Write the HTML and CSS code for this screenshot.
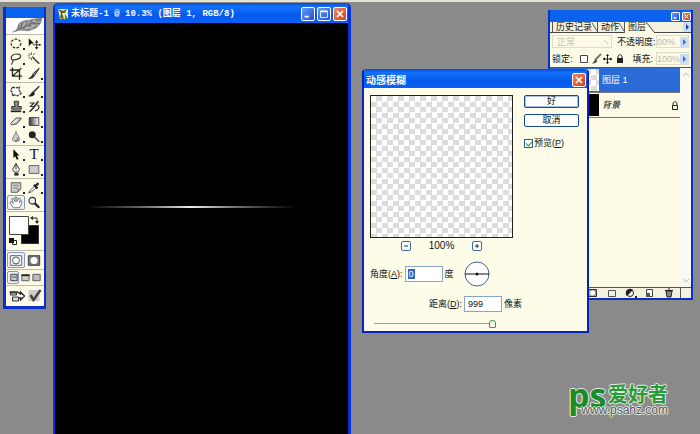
FILE: index.html
```html
<!DOCTYPE html>
<html lang="zh-CN">
<head>
<meta charset="utf-8">
<title>未标题-1</title>
<link rel="stylesheet" href="styles.css">
</head>
<body>
<main class="desktop">

<aside class="toolbox">
  <div class="toolbox-title"></div>
  <svg class="feather" viewBox="0 0 38 17"><path d="M8 14C12 11 10 6 15 4C18 1 22 3 26 1C30 0 34 0 37 0C38 3 36 6 34 8C31 12 26 13 22 14C18 14 14 13 11 14Z" fill="#999"/><path d="M6 15C14 12 20 9 36 1M15 11L16 4M19 9L21 3M24 7L27 1M17 11L24 13M22 8L31 10M27 6L35 6M13 12L12 8M29 4L32 1" fill="none" stroke="#666"/><path d="M17 8L20 5M25 10L29 8M19 12L23 10M28 3L31 4" stroke="#ddd"/></svg>
  <div class="tools">
    <button class="tool more" aria-label="选框"><svg viewBox="0 0 16 14"><ellipse cx="8" cy="7" rx="5.500" ry="5" fill="none" stroke="#222" stroke-dasharray="3 1.500" stroke-width="1.300"/></svg></button>
    <button class="tool" aria-label="移动"><svg viewBox="0 0 16 14"><path d="M2 1L8 7L5 7L2 10Z" fill="#111"/><path d="M11 4V13M6.500 8.500H15.500" stroke="#222"/><path d="M9 6L11 3L13 6ZM9 11L11 14L13 11ZM14 7L16 8.500L14 10Z" fill="#222"/></svg></button>
    <button class="tool more" aria-label="套索"><svg viewBox="0 0 16 14"><path d="M4 9C0 5 5 1 10 2C15 2 14 7 9 8C6 9 4 8 4 9C6 10 3 12 3 14" fill="none" stroke="#333" stroke-width="1.300"/></svg></button>
    <button class="tool" aria-label="魔棒"><svg viewBox="0 0 16 14"><path d="M6 5L14 13" stroke="#333" stroke-width="1.600"/><path d="M5 0V3M5 6V9M1 4H3M7 3L9 1M2 1L4 3M2 7L4 6" stroke="#444"/></svg></button>
    <button class="tool" aria-label="裁剪"><svg viewBox="0 0 16 14"><path d="M4 0V10H15M1 3H12V14M4 10L14 1" fill="none" stroke="#222" stroke-width="1.500"/></svg></button>
    <button class="tool more" aria-label="切片"><svg viewBox="0 0 16 14"><path d="M14 1L7 7L6 10L9 9Z" fill="#888" stroke="#222"/><path d="M6 9C4 10 4 12 1 13C5 14 8 12 9 9Z" fill="#333"/></svg></button>
  </div>
  <div class="tools">
    <button class="tool more" aria-label="修补"><svg viewBox="0 0 16 14"><path d="M4 2L7 3L12 2L11 5L14 9L10 12L7 11L4 12L4 8L2 6Z" fill="#fff" stroke="#333" stroke-width="1.400" stroke-dasharray="3 1"/></svg></button>
    <button class="tool more" aria-label="画笔"><svg viewBox="0 0 16 14"><path d="M14 1L7 8" stroke="#444" stroke-width="2"/><path d="M7 7C4 8 5 11 1 12C5 14 9 12 9 9Z" fill="#222"/></svg></button>
    <button class="tool more" aria-label="图章"><svg viewBox="0 0 16 14"><path d="M6 1H11V4L10 7H14V10H3V7H7L6 4Z" fill="#888" stroke="#222"/><path d="M2 12.500H14" stroke="#222" stroke-width="2"/></svg></button>
    <button class="tool more" aria-label="历史画笔"><svg viewBox="0 0 16 14"><path d="M13 1L7 9L3 13" stroke="#333" stroke-width="2"/><path d="M3 3H8L4 7H9M12 5C16 8 12 12 9 12" fill="none" stroke="#333" stroke-width="1.300"/></svg></button>
    <button class="tool more" aria-label="橡皮"><svg viewBox="0 0 16 14"><path d="M2 9L8 3H14L8 10L3 11Z" fill="#ddd" stroke="#333"/><path d="M3 10L8 9L14 3V5L8 11H3Z" fill="#777"/></svg></button>
    <button class="tool more" aria-label="渐变"><svg viewBox="0 0 16 14"><defs><linearGradient id="ramp"><stop stop-color="#333"/><stop offset="1" stop-color="#fff"/></linearGradient></defs><path d="M2.500 2.500H13.500V11.500H2.500Z" fill="url(#ramp)" stroke="#333"/></svg></button>
    <button class="tool more" aria-label="模糊"><svg viewBox="0 0 16 14"><path d="M8 1C8 4 4 7 4 10C4 14 12 14 12 10C12 7 8 4 8 1Z" fill="#ccc" stroke="#777"/><path d="M10 8V11L7 12" fill="none" stroke="#888" stroke-width="2"/></svg></button>
    <button class="tool more" aria-label="减淡"><svg viewBox="0 0 16 14"><circle cx="6" cy="5" r="4" fill="#222"/><path d="M8 7L14 13" stroke="#444" stroke-width="1.600"/></svg></button>
  </div>
  <div class="tools">
    <button class="tool more" aria-label="路径选择"><svg viewBox="0 0 16 14"><path d="M5 1L12 8H9L11 12L9 13L7 9L5 11Z" fill="#111"/></svg></button>
    <button class="tool more type">T</button>
    <button class="tool more" aria-label="钢笔"><svg viewBox="0 0 16 14"><path d="M8 0L4 7L6 10H10L12 7Z" fill="#eee" stroke="#222"/><path d="M8 1V7" stroke="#222"/><path d="M6 11H11V14H6Z" fill="#333"/></svg></button>
    <button class="tool more" aria-label="矩形"><svg viewBox="0 0 16 14"><path d="M2.500 2.500H13.500V11.500H2.500Z" fill="#ccc" stroke="#555"/></svg></button>
  </div>
  <div class="tools">
    <button class="tool more" aria-label="注释"><svg viewBox="0 0 16 14"><path d="M2.500 1.500H13.500V8.500L10 12.500H2.500Z" fill="#ccc" stroke="#555"/><path d="M5 4.500H11M5 7.500H10M13 9H10V12" fill="none" stroke="#777"/></svg></button>
    <button class="tool more" aria-label="吸管"><svg viewBox="0 0 16 14"><path d="M9 5L3 11L2 13L5 12L11 7" fill="#fff" stroke="#444"/><path d="M8 4L12 8M10 5L13 2" stroke="#222" stroke-width="2.500"/></svg></button>
    <button class="tool active" aria-label="抓手"><svg viewBox="0 0 16 14"><path d="M5 13L1 7L3 6L5 8L3 3L5 2L7 6L7 1H9V6L11 2L13 3L12 7L14 5L15 7L12 13Z" fill="#fff" stroke="#444" stroke-width=".8"/></svg></button>
    <button class="tool" aria-label="缩放"><svg viewBox="0 0 16 14"><circle cx="6" cy="5" r="3.800" fill="#eee" stroke="#333" stroke-width="1.300"/><path d="M9 8L14 13" stroke="#222" stroke-width="2.500"/></svg></button>
  </div>
  <div class="swatches">
    <svg viewBox="0 0 38 38"><path d="M15.500 13.500H32.500V31.500H15.500Z" fill="#000" stroke="#333"/><path d="M3.500 4.500H22.500V22.500H3.500Z" fill="#fff" stroke="#444"/><path d="M26 6H31V10" fill="none" stroke="#222"/><path d="M24 6L27 4V8ZM29 9H33L31 12Z" fill="#222"/><path d="M6.500 28.500H10.500V32.500H6.500Z" fill="#fff" stroke="#222"/><path d="M3 26H8V31H3Z" fill="#111"/></svg>
  </div>
  <div class="tools">
    <button class="tool mode active" aria-label="标准模式"><svg viewBox="0 0 16 14"><path d="M1.500 1.500H14.500V12.500H1.500Z" fill="#fff" stroke="#555"/><circle cx="8" cy="7" r="4" fill="#fff" stroke="#333"/></svg></button>
    <button class="tool mode" aria-label="快速蒙版"><svg viewBox="0 0 16 14"><path d="M1.500 1.500H14.500V12.500H1.500Z" fill="#777" stroke="#333"/><circle cx="8" cy="7" r="4" fill="#fff"/></svg></button>
  </div>
  <div class="tools screens">
    <button class="tool active" aria-label="标准屏幕"><svg viewBox="0 0 12 12"><path d="M2.500 2.500H9.500V9.500H2.500Z" fill="#ccc" stroke="#333"/><path d="M4 5.500H9" stroke="#555"/></svg></button>
    <button class="tool" aria-label="带菜单全屏"><svg viewBox="0 0 12 12"><path d="M2.500 3.500H10.500V9.500H2.500Z" fill="#ccc" stroke="#555"/><path d="M2 3.500H11" stroke="#222" stroke-width="2"/></svg></button>
    <button class="tool" aria-label="全屏"><svg viewBox="0 0 12 12"><path d="M1.500 2.500H9.500V9.500H1.500Z" fill="#bbb" stroke="#555"/></svg></button>
  </div>
  <div class="tools jump">
    <button class="tool" aria-label="跳转"><svg viewBox="0 0 16 14"><path d="M1 3H9L12 5V3L16 7L12 11V9H6" fill="#fff" stroke="#222" stroke-width="1.300"/><path d="M2 4H8V6H2ZM4 8H10V12H4Z" fill="#ddd" stroke="#333"/></svg></button>
    <button class="tool" aria-label="ImageReady"><svg viewBox="0 0 16 14"><path d="M2 1H13V12H2Z" fill="#ccc"/><path d="M4 6L7 11L14 1" fill="none" stroke="#444" stroke-width="2.500"/></svg></button>
  </div>
</aside>

<section class="document">
  <header class="titlebar">
    <svg class="app-icon" viewBox="0 0 12 12"><path d="M1 1H11V11H3Z" fill="#e5edbb"/><path d="M1 1L6 3L10 1L8 5L5 5L7 11L3 10L4 5Z" fill="#655e22"/><path d="M8 6L11 11H8Z" fill="#347b37"/></svg>
    <h1 class="doc-title">未标题-1 @ 10.3% (图层 1, RGB/8)</h1>
    <button class="caption" aria-label="最小化"><svg viewBox="0 0 14 14"><path d="M3 10H8" stroke="#fff" stroke-width="2"/></svg></button>
    <button class="caption" aria-label="最大化"><svg viewBox="0 0 14 14"><path d="M3 4H11V11H3Z" fill="none" stroke="#fff"/><path d="M3 4H11" stroke="#fff" stroke-width="2"/></svg></button>
    <button class="caption close" aria-label="关闭"><svg viewBox="0 0 14 14"><path d="M3.500 3.500L10.500 10.500M10.500 3.500L3.500 10.500" stroke="#fff" stroke-width="2"/></svg></button>
  </header>
  <div class="canvas"><div class="streak"></div></div>
</section>

<section class="panel">
  <header class="panel-title">
    <button class="caption" aria-label="最小化面板"><svg viewBox="0 0 14 14"><path d="M3 10H9" stroke="#fff" stroke-width="3"/></svg></button>
    <button class="caption close" aria-label="关闭面板"><svg viewBox="0 0 14 14"><path d="M3 3L11 11M11 3L3 11" stroke="#fff" stroke-width="2"/></svg></button>
  </header>
  <nav class="tabs">
    <button class="tab">历史记录<svg viewBox="0 0 6 10"><path d="M0 0L6 10" stroke="#444"/></svg></button><button class="tab">动作<svg viewBox="0 0 6 10"><path d="M0 0L6 10" stroke="#444"/></svg></button><button class="tab current">图层<svg viewBox="0 0 8 10"><path d="M0 0H8V10Z" fill="#f3f1df"/><path d="M0 0L8 10" stroke="#444"/></svg></button>
    <button class="arrow" aria-label="面板菜单"><svg viewBox="0 0 8 10"><path d="M3 2L6 5L3 8Z" fill="#163fa5"/></svg></button>
  </nav>
  <div class="options">
    <select class="blend" aria-label="混合模式" disabled><option>正常</option></select>
    <label for="opacity">不透明度:</label>
    <span class="field"><input id="opacity" value="00%" disabled><button class="arrow" aria-label="调整不透明度"><svg viewBox="0 0 8 10"><path d="M3 2L6 5L3 8Z" fill="#4267a5"/></svg></button></span>
  </div>
  <div class="options">
    <span>锁定:</span>
    <svg class="lock-icons" viewBox="0 0 50 12"><path d="M5.500 2.500H12.500V9.500H5.500Z" fill="#fff" stroke="#444"/><path d="M26 1L20 7" stroke="#777" stroke-width="2"/><path d="M21 6L17 11L22 9Z" fill="#333"/><path d="M32.500 2V10M28 6H37" stroke="#222"/><path d="M31 3L32.500 1L34 3ZM31 9L32.500 11L34 9ZM30 4.500L28 6L30 7.500ZM35 4.500L37 6L35 7.500Z"/><path d="M43 5V4C43 1 47 1 47 4V5" fill="none" stroke="#222"/><path d="M42 5H48V10H42Z" fill="#222"/></svg>
    <label class="fill-label" for="fill">填充:</label>
    <span class="field"><input id="fill" value="100%" disabled><button class="arrow" aria-label="调整填充"><svg viewBox="0 0 8 10"><path d="M3 2L6 5L3 8Z" fill="#4267a5"/></svg></button></span>
  </div>
  <div class="layers">
    <div class="layer-list">
      <div class="layer selected"><span class="thumb checker"></span><span class="layer-name">图层 1</span></div>
      <div class="layer"><span class="thumb black"></span><em class="layer-name">背景</em><svg class="padlock" viewBox="0 0 8 9"><path d="M2 4V3C2 0 6 0 6 3V4M1.500 4.500H6.500V8.500H1.500Z" fill="none" stroke="#222"/></svg></div>
    </div>
    <div class="scroll"><svg viewBox="0 0 8 6"><path d="M1 5L4 2L7 5" fill="none" stroke="#bbb"/></svg><svg viewBox="0 0 8 6"><path d="M1 1L4 4L7 1" fill="none" stroke="#bbb"/></svg></div>
  </div>
  <footer class="panel-foot">
    <svg viewBox="0 0 12 10"><path d="M1.500 1.500H9.500V8.500H1.500Z" fill="#999" stroke="#333"/><circle cx="5.500" cy="5" r="2.500" fill="#fff"/></svg>
    <svg viewBox="0 0 12 10"><path d="M2.500 2.500H9.500V8.500H2.500Z" fill="#eee" stroke="#555"/></svg>
    <svg viewBox="0 0 12 10"><circle cx="5" cy="5" r="3.500" fill="#fff" stroke="#222"/><path d="M2 8A4 4 0 0 1 8 2ZM10 8H12V10H10Z" fill="#222"/></svg>
    <svg viewBox="0 0 12 10"><path d="M2.500 1.500H8.500V8.500H2.500Z" fill="#fff" stroke="#444"/><path d="M2 5H6V9H2Z" fill="#555"/></svg>
    <svg viewBox="0 0 12 10"><path d="M3 3H9L8 9H4Z" fill="#888" stroke="#222"/><path d="M2 2.500H10M5 1H7" stroke="#222"/></svg>
    <span class="grip"></span>
  </footer>
</section>

<section class="dialog">
  <header class="titlebar">
    <h2 class="dialog-title">动感模糊</h2>
    <button class="caption close" aria-label="关闭对话框"><svg viewBox="0 0 14 14"><path d="M3.500 3.500L10.500 10.500M10.500 3.500L3.500 10.500" stroke="#fff" stroke-width="2"/></svg></button>
  </header>
  <form class="dialog-body">
    <div class="top">
      <div class="preview">
        <div class="preview-image checker"></div>
        <div class="zoom"><button type="button" class="step" aria-label="缩小"><svg viewBox="0 0 8 8"><path d="M2 4H6" stroke="#234"/></svg></button><output>100%</output><button type="button" class="step" aria-label="放大"><svg viewBox="0 0 8 8"><path d="M2 4H6M4 2V6" stroke="#234"/></svg></button></div>
      </div>
      <div class="actions">
        <button type="button" class="push default">好</button>
        <button type="button" class="push">取消</button>
        <label class="check"><input type="checkbox" checked><span>预览(<u>P</u>)</span></label>
      </div>
    </div>
    <div class="row"><label for="angle">角度(<u>A</u>):</label><input class="number" id="angle" value="0"><span>度</span>
      <svg class="dial" viewBox="0 0 26 26"><circle cx="13" cy="13" r="12" fill="#fff" stroke="#456092"/><path d="M1 13H25" stroke="#111"/><circle cx="13" cy="13" r="1.500" fill="#111"/></svg></div>
    <div class="row distance"><label for="distance">距离(<u>D</u>):</label><input class="number" id="distance" value="999"><span>像素</span></div>
    <input class="slider" type="range" min="1" max="999" value="999" aria-label="距离">
  </form>
</section>

<div class="brand"><span class="ps">ps</span><div class="brand-text"><span class="brand-name">爱好者</span><span class="url">www.psahz.com</span></div></div>
</main>
</body>
</html>
```
FILE: styles.css
```css
* { box-sizing: border-box; }
body { margin: 0; font: 10px/12px "Liberation Sans", "Noto Sans CJK SC", sans-serif; color: #111; }
button, input, select { font: inherit; color: inherit; margin: 0; padding: 0; border: 0; background: none; border-radius: 0; }
svg { display: block; }
h1, h2 { margin: 0; }
.desktop { position: relative; height: 100vh; overflow: hidden; background: #8a8a8a; border-top: 2px solid #e4e2d2; }

/* Windows placed freely on the desktop */
.toolbox, .document, .panel, .dialog, .brand { position: absolute; }

/* Toolbox */
.toolbox { left: 3px; top: 5px; width: 43px; background: #fdfbe6; border: solid #0a2fc4; border-width: 0 2px 3px 3px; }
.toolbox-title { height: 11px; background: #0a62ee; }
.feather { width: 100%; height: 16px; background: #fff; }
.tools { display: grid; grid-template-columns: 18px 18px; justify-content: center; padding: 1px 0; border-top: 1px solid #bdbbad; }
.tool { position: relative; height: 15px; display: grid; place-items: center; }
.tool svg { width: 14px; height: 13px; }
.more::after { content: ""; position: absolute; right: 0; bottom: 1px; width: 2px; height: 2px; background: #222; }
.type { font: 15px/15px "Liberation Serif", serif; }
.active { background: #f0f1f5; border: 1px solid #8798c7; border-radius: 2px; }
.swatches { border-top: 1px solid #bdbbad; }
.swatches svg { width: 38px; height: 38px; }
.mode { height: 16px; }
.screens { grid-template-columns: 12px 12px 12px; }
.screens .tool { height: 13px; }
.screens svg { width: 12px; height: 11px; }
.jump .tool { height: 18px; }
.jump svg { width: 17px; height: 14px; }

/* Window chrome */
.titlebar { display: flex; align-items: center; gap: 2px; color: #fff; background: linear-gradient(#0a4cd0, #1273ff 20%, #0858e8 60%, #0563f8); }
.caption { flex: none; width: 14px; height: 14px; border: 1px solid #fff; border-radius: 2px; background: linear-gradient(135deg, #6a9bf5, #1c50d4); }
.caption svg { width: 100%; height: 100%; }
.close { background: linear-gradient(135deg, #f08968, #d93d17); }

/* Image window */
.document { left: 53px; top: 1px; width: 298px; bottom: 0; display: flex; flex-direction: column; border: solid #0831d9; border-width: 0 3px 0 2px; border-radius: 5px 5px 0 0; overflow: hidden; }
.document .titlebar { height: 20px; padding: 2px 1px 0 2px; }
.app-icon { width: 12px; height: 12px; }
.doc-title { flex: 1; font: bold 9px/12px "Liberation Mono", "Noto Sans CJK SC", monospace; white-space: pre; }
.canvas { flex: 1; background: #000; padding-top: 183px; }
.streak { height: 2px; margin: 0 52px 0 32px; background: linear-gradient(90deg, transparent, #777 30%, #eee 50%, #777 70%, transparent); }

/* Layers panel */
.panel { left: 548px; top: 8px; width: 145px; height: 290px; display: flex; flex-direction: column; background: #fdfbe6; border: 2px solid #0a2fc4; border-top: 0; }
.panel-title { height: 12px; display: flex; justify-content: flex-end; align-items: center; gap: 2px; background: #0a62ee; }
.panel-title .caption { width: 9px; height: 9px; border-radius: 1px; }
.tabs { display: flex; height: 11px; padding-left: 2px; border-bottom: 1px solid #444; background: #f3f1df; }
.tab { display: flex; padding-left: 3px; font-size: 9px; line-height: 10px; border-left: 1px solid #555; }
.tab svg { width: 5px; height: 10px; }
.current { background: #fdfbe6; height: 11px; }
.current svg { width: 8px; }
.tabs .arrow { margin-left: auto; }
.arrow { width: 8px; height: 10px; background: #c9dcfa; border-radius: 1px; }
.arrow svg { width: 8px; height: 10px; }
.options { height: 17px; display: flex; align-items: center; padding: 0 2px; font-size: 9px; white-space: nowrap; }
.blend { width: 60px; height: 13px; padding: 0 4px; appearance: none; opacity: 1; color: #c5c3b4; border: 1px solid #dedcc9; margin-right: 5px; background: linear-gradient(45deg, transparent 45%, #c5c3b4 45% 55%, transparent 55%) 51px 4px / 4px 4px no-repeat; }
.field { display: flex; align-items: center; margin-left: auto; border: 1px solid #dedcc9; }
.field input { width: 23px; height: 11px; color: #bbb9aa; }
.lock-icons { width: 50px; height: 12px; margin-left: 2px; }
.fill-label { margin-left: 8px; }
.layers { flex: 1; display: flex; border-top: 1px solid #555; }
.layer-list { flex: 1; }
.layer { height: 25px; display: flex; align-items: center; padding-left: 30px; gap: 3px; border-bottom: 1px solid #777; font-size: 9px; }
.thumb { width: 19px; height: 22px; }
.black { background: #000; }
.selected { color: #fff; background: #2a6bd8; }
.padlock { width: 8px; height: 9px; margin: 0 1px 0 auto; }
.scroll { width: 11px; display: flex; flex-direction: column; align-items: center; justify-content: space-between; padding: 3px 0; background: #fafaf5; }
.scroll svg { width: 8px; height: 6px; }
.panel-foot { height: 11px; display: flex; justify-content: flex-end; gap: 7px; border-top: 1px solid #555; background: #f3f1df; }
.panel-foot svg { width: 12px; height: 10px; }
.grip { width: 11px; border-left: 1px solid #555; margin-left: -2px; }

.checker { background: conic-gradient(#dcdcdc 25%, #fff 25% 50%, #dcdcdc 50% 75%, #fff 75%) 0 0 / 11px 11px; }

/* Motion blur dialog */
.dialog { left: 362px; top: 67px; width: 227px; background: #fdfce8; border: 2px solid #0524b8; border-top: 0; border-radius: 4px 4px 0 0; overflow: hidden; }
.dialog .titlebar { height: 19px; padding: 2px 1px 0 2px; justify-content: space-between; }
.dialog-title { font: bold 10px/12px "Noto Sans CJK SC", sans-serif; }
.dialog-body { padding: 7px 6px 3px; }
.top { display: flex; gap: 11px; }
.preview-image { width: 143px; height: 143px; border: 1px solid #222; }
.zoom { display: flex; align-items: center; justify-content: center; gap: 18px; margin-top: 2px; height: 12px; }
.step { width: 10px; height: 10px; background: #fff; border: 1px solid #4469a2; border-radius: 2px; }
.step svg { width: 8px; height: 8px; }
.actions { display: flex; flex-direction: column; flex: 1; }
.push { width: 55px; height: 13px; margin-bottom: 6px; font-size: 9px; line-height: 11px; background: #fefefe; border: 1px solid #17498a; border-radius: 2px; }
.default { box-shadow: inset 0 0 0 1px #a9c3ef; }
.check { display: flex; align-items: center; gap: 1px; margin-top: 3px; height: 14px; font-size: 9px; white-space: nowrap; }
.check input { appearance: none; flex: none; width: 9px; height: 9px; border: 1px solid #315c91; background: #fff; display: grid; place-items: center; }
.check input:checked::after { content: ""; width: 5px; height: 3px; border: solid #21a121; border-width: 0 0 1px 1px; transform: rotate(-45deg); }
.row { display: flex; align-items: center; height: 26px; margin-top: 9px; font-size: 9px; }
.number { width: 38px; height: 16px; margin: 0 2px; padding: 0 3px; background: #fff; border: 1px solid #8ba5c9; }
#angle { color: #fff; background: linear-gradient(#3169c6, #3169c6) 2px 2px / 7px 10px no-repeat #fff; }
.dial { width: 26px; height: 26px; margin-left: 10px; }
.distance { margin-top: 4px; padding-left: 59px; }
.slider { appearance: none; display: block; width: 126px; height: 9px; margin-top: 2px; background: linear-gradient(#999, #999) 4px 4px / 118px 1px no-repeat; }
.slider::-webkit-slider-thumb { appearance: none; width: 7px; height: 8px; border: 1px solid #3b9b52; border-radius: 3px 3px 1px 1px; background: #f1f5ec; }

/* Site mark */
.brand { right: 32px; bottom: 18px; display: flex; align-items: flex-end; text-shadow: 1px 0 #e3eee3, -1px 0 #e3eee3, 0 1px #e3eee3, 0 -1px #e3eee3; }
.ps { font: bold 34px/34px "Open Sans", sans-serif; color: #198b2b; margin: 0 -25px 4px 0; }
.brand-text { display: flex; flex-direction: column; align-items: flex-end; }
.brand-name { font: bold 20px/20px "Noto Sans CJK SC", sans-serif; color: #2b9a3b; }
.url { font: 12px/12px "Liberation Sans", sans-serif; color: #555; }
```
